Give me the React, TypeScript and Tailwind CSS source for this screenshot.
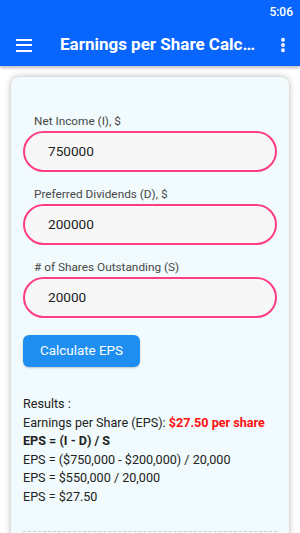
import { MoreVertical } from 'lucide-react';

const fields = [
  { label: 'Net Income (I), $', value: '750000' },
  { label: 'Preferred Dividends (D), $', value: '200000' },
  { label: '# of Shares Outstanding (S)', value: '20000' },
];

export default function App() {
  return (
    <div className="w-[300px] h-[533px] overflow-hidden bg-white font-['Roboto',sans-serif]">
      {/* status + app bar */}
      <div className="bg-[#0866ff] shadow-[0_2px_3px_rgba(0,0,0,0.25)]">
        <div className="h-6 flex items-center justify-end pr-[7px] text-white text-[12px] font-medium">5:06</div>
        <div className="h-[42px] flex items-center text-white">
          <div className="w-[46px] flex justify-center pl-[1px]">
            <div className="flex flex-col gap-[3.5px]">
              <span className="block w-[16px] h-[2px] bg-white" />
              <span className="block w-[16px] h-[2px] bg-white" />
              <span className="block w-[16px] h-[2px] bg-white" />
            </div>
          </div>
          <div className="flex-1 pl-[14px] text-[17px] font-bold truncate">Earnings per Share Calc…</div>
          <div className="w-[30px] flex justify-center pr-[4px]">
            <MoreVertical size={18} strokeWidth={3.2} />
          </div>
        </div>
      </div>

      {/* card */}
      <div className="mx-[11px] mt-[11px] rounded-lg bg-[#f1fafc] shadow-[0_0_6px_rgba(0,0,0,0.3)] px-[12px] pt-[37px] pb-10">
        <div className="flex flex-col gap-[15px]">
          {fields.map((f) => (
            <div key={f.label}>
              <div className="pl-[11px] text-[11.8px] text-[#484848] mb-[2px] leading-[15px]">{f.label}</div>
              <div className="h-[41px] rounded-full border-[2px] border-[#ff3d85] bg-[#f7f7f7] flex items-center pl-[23px] text-[13.6px] text-[#222]">
                {f.value}
              </div>
            </div>
          ))}
        </div>

        <button className="mt-[17px] w-[117px] h-[32px] rounded-[6px] bg-[#1e8ff0] text-white text-[13.4px] shadow-[0_1px_2px_rgba(0,0,0,0.2)]">
          Calculate EPS
        </button>

        <div className="mt-[28px] text-[12.6px] text-[#222] leading-[18.6px]">
          <div>Results :</div>
          <div>
            Earnings per Share (EPS): <span className="text-[#ff1010] font-bold">$27.50 per share</span>
          </div>
          <div className="font-bold">EPS = (I - D) / S</div>
          <div>EPS = ($750,000 - $200,000) / 20,000</div>
          <div>EPS = $550,000 / 20,000</div>
          <div>EPS = $27.50</div>
        </div>

        <div className="mt-[24px] border-t border-dashed border-[#ccc]" />
      </div>
    </div>
  );
}
